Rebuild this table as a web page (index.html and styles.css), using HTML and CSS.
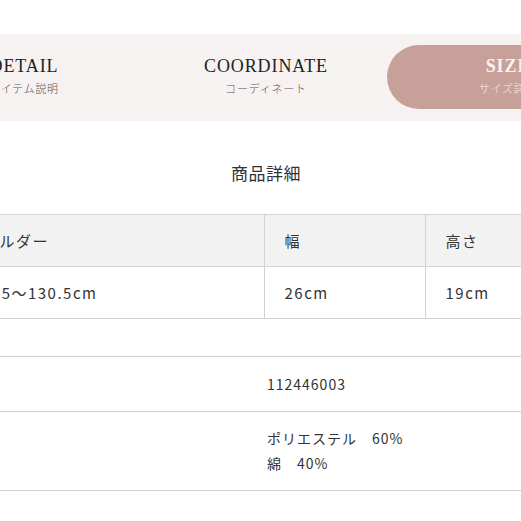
FILE: index.html
```html
<!DOCTYPE html>
<html lang="ja">
<head>
<meta charset="utf-8">
<title>商品詳細</title>
<link rel="stylesheet" href="styles.css">
</head>
<body>
<div class="page">
  <nav class="tabs">
    <a class="tab">
      <span class="tab-title">DETAIL</span>
      <span class="tab-sub">アイテム説明</span>
    </a>
    <a class="tab">
      <span class="tab-title">COORDINATE</span>
      <span class="tab-sub">コーディネート</span>
    </a>
    <a class="tab tab-active">
      <span class="tab-title">SIZE</span>
      <span class="tab-sub">サイズ詳細</span>
    </a>
  </nav>

  <h2 class="section-title">商品詳細</h2>

  <table class="size-table">
    <colgroup>
      <col class="c1"><col class="c2"><col class="c3">
    </colgroup>
    <thead>
      <tr><th>ショルダー</th><th>幅</th><th>高さ</th></tr>
    </thead>
    <tbody>
      <tr><td>110.5～130.5cm</td><td>26cm</td><td>19cm</td></tr>
    </tbody>
  </table>

  <table class="info-table">
    <colgroup>
      <col class="l"><col class="v">
    </colgroup>
    <tbody>
      <tr class="first"><th></th><td>112446003</td></tr>
      <tr><th></th><td>ポリエステル　60%<br>綿　40%</td></tr>
    </tbody>
  </table>
</div>
</body>
</html>
```

FILE: styles.css
```css
html, body {
  margin: 0;
  padding: 0;
  background: #ffffff;
  overflow: hidden;
}

body {
  font-family: "Noto Sans CJK JP", "Noto Sans", sans-serif;
  color: #333333;
}

.page {
  width: 726px;
  margin-left: -97px;
}

.tabs {
  margin-top: 34px;
  background: #f6f2f1;
  padding: 11px 0 12px;
  display: grid;
  grid-template-columns: 242px 242px 242px;
}

.tab {
  height: 64px;
  display: flex;
  flex-direction: column;
  align-items: center;
  justify-content: center;
  padding-bottom: 3px;
  box-sizing: border-box;
  text-decoration: none;
  border-radius: 32px;
}

.tab-title {
  font-family: "Liberation Serif", "Times New Roman", serif;
  font-size: 18px;
  line-height: 22px;
  letter-spacing: 0.9px;
  color: #222222;
}

.tab-sub {
  margin-top: 3px;
  font-size: 11px;
  line-height: 16px;
  letter-spacing: 0.8px;
  color: #555555;
  font-weight: 300;
}

.tab-active {
  background: #c8a09a;
}

.tab-active .tab-title {
  color: #fbf2f0;
  font-weight: bold;
}

.tab-active .tab-sub {
  color: #f6e8e5;
}

.section-title {
  margin: 39px 0 0;
  font-size: 17px;
  line-height: 25px;
  font-weight: 400;
  text-align: center;
  color: #333333;
  letter-spacing: 0.5px;
}

.size-table {
  margin: 29px auto 0;
  width: 640px;
  table-layout: fixed;
  border-collapse: collapse;
  font-size: 15px;
  line-height: 25px;
  letter-spacing: 1.5px;
}

.size-table col.c1 { width: 318px; }
.size-table col.c2 { width: 161px; }
.size-table col.c3 { width: 161px; }

.size-table th,
.size-table td {
  border: 1px solid #d2d2d2;
  padding: 13px 20px;
  text-align: left;
  font-weight: 400;
  white-space: nowrap;
  color: #333333;
}

.size-table th {
  background: #f2f2f2;
}

.info-table {
  margin-top: 37px;
  width: 726px;
  table-layout: fixed;
  border-collapse: collapse;
  font-size: 14px;
  letter-spacing: 1px;
  line-height: 25px;
}

.info-table col.l { width: 344px; }

.info-table th,
.info-table td {
  border-top: 1px solid #d2d2d2;
  border-bottom: 1px solid #d2d2d2;
  padding: 14px 20px;
  text-align: left;
  font-weight: 400;
  color: #333333;
  vertical-align: middle;
}

.info-table .first th,
.info-table .first td {
  padding-top: 15px;
}
```
